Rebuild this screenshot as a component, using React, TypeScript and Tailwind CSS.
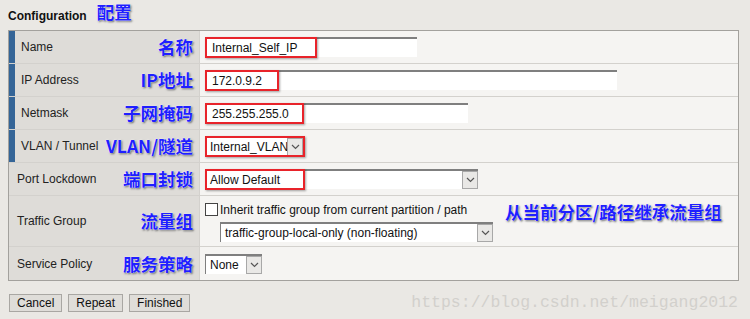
import React from "react";

const font = "font-['Liberation_Sans',Arial,sans-serif]";

function Note({ children, className = "" }: { children: React.ReactNode; className?: string }) {
  return (
    <span
      className={`font-['Noto_Sans_CJK_SC',sans-serif] font-bold text-[#1f1fff] leading-none [text-shadow:0_0_1px_#fff,0_0_2px_#fff,1px_1px_2px_#444] ${className}`}
    >
      {children}
    </span>
  );
}

function Chevron() {
  return (
    <svg width="9" height="6" viewBox="0 0 9 6" fill="none">
      <path d="M1 1l3.5 3.5L8 1" stroke="#555" strokeWidth="1.2" />
    </svg>
  );
}

function Select({ value, width, marked }: { value: string; width: string; marked?: string }) {
  return (
    <div className={`relative flex h-[20px] ${width} border-t-2 border-l border-[#7f7f7f] bg-white`}>
      <span className="flex-1 overflow-hidden whitespace-nowrap pl-[4px] text-[12px] leading-[18px] text-[#111]">{value}</span>
      <span className="flex w-[16px] items-center justify-center border border-[#a8a8a8] bg-[#e9e8e6]">
        <Chevron />
      </span>
      {marked && <span className={`pointer-events-none absolute -left-[1px] -top-[2px] h-[21px] ${marked} border-2 border-[#e8232a] shadow-[1px_1px_2px_rgba(0,0,0,0.35)]`} />}
    </div>
  );
}

function Input({ value, width, marked }: { value: string; width: string; marked: string }) {
  return (
    <div className={`relative h-[20px] ${width} border-t-2 border-l border-[#7f7f7f] bg-white`}>
      <span className="block pl-[6px] text-[12px] leading-[18px] text-[#111]">{value}</span>
      <span className={`pointer-events-none absolute -left-[1px] -top-[2px] h-[21px] ${marked} border-2 border-[#e8232a] shadow-[1px_1px_2px_rgba(0,0,0,0.35)]`} />
    </div>
  );
}

function Row({
  label,
  note,
  required,
  height = "h-[33px]",
  children,
  last,
}: {
  label: string;
  note: string;
  required?: boolean;
  height?: string;
  children: React.ReactNode;
  last?: boolean;
}) {
  return (
    <div className={`flex ${height} ${last ? "" : "border-b border-[#d3d1cd]"}`}>
      <div className="flex w-[191px] items-center border-r border-[#d3d1cd] bg-[#dedcd8]">
        {required ? <div className="h-full w-[6px] bg-[#356597]" /> : null}
        <span className={`${required ? "pl-[6px]" : "pl-[8px]"} flex-1 text-[12px] text-[#222]`}>{label}</span>
        <Note className="pr-[6px] text-[17.5px]">{note}</Note>
      </div>
      <div className="flex flex-1 items-center bg-[#f5f4f2] pl-[5px]">{children}</div>
    </div>
  );
}

export default function App() {
  return (
    <div className={`${font} relative h-[319px] w-[750px] overflow-hidden bg-[#eae8e4]`}>
      <div className="flex h-[30px] items-center pl-[8px] pt-[2px]">
        <span className="text-[12px] font-bold text-[#111]">Configuration</span>
        <Note className="ml-[10px] -mt-[8px] text-[17.5px]">配置</Note>
      </div>
      <div className="ml-[8px] w-[731px] border border-[#a3a19d]">
        <Row label="Name" note="名称" required>
          <Input value="Internal_Self_IP" width="w-[212px]" marked="w-[112px]" />
        </Row>
        <Row label="IP Address" note="IP地址" required>
          <Input value="172.0.9.2" width="w-[412px]" marked="w-[74px]" />
        </Row>
        <Row label="Netmask" note="子网掩码" required>
          <Input value="255.255.255.0" width="w-[263px]" marked="w-[99px]" />
        </Row>
        <Row label="VLAN / Tunnel" note="VLAN/隧道" required>
          <Select value="Internal_VLAN" width="w-[98px]" marked="w-[100px]" />
        </Row>
        <Row label="Port Lockdown" note="端口封锁">
          <Select value="Allow Default" width="w-[273px]" marked="w-[100px]" />
        </Row>
        <Row label="Traffic Group" note="流量组" height="h-[51px]">
          <div className="flex w-full items-start">
            <div className="flex flex-col">
              <div className="flex items-center">
                <span className="h-[13px] w-[13px] border border-[#444] bg-white" />
                <span className="ml-[2px] text-[12px] text-[#111]">Inherit traffic group from current partition / path</span>
              </div>
              <div className="ml-[15px] mt-[3px]">
                <Select value="traffic-group-local-only (non-floating)" width="w-[273px]" />
              </div>
            </div>
            <Note className="ml-[12px] mt-[2px] text-[17.5px]">从当前分区/路径继承流量组</Note>
          </div>
        </Row>
        <Row label="Service Policy" note="服务策略" last>
          <Select value="None" width="w-[57px]" />
        </Row>
      </div>
      <div className="mt-[10px] flex items-center gap-[6px] pl-[9px]">
        {["Cancel", "Repeat", "Finished"].map((b) => (
          <button
            key={b}
            className="h-[18px] border border-[#a9a7a3] bg-[#dfddd9] px-[7px] text-[12px] leading-[16px] text-[#111]"
          >
            {b}
          </button>
        ))}
        <span className="ml-auto pr-[12px] font-['Liberation_Mono',monospace] text-[16.5px] text-[#d2d0cc]">
          https://blog.csdn.net/meigang2012
        </span>
      </div>
    </div>
  );
}
